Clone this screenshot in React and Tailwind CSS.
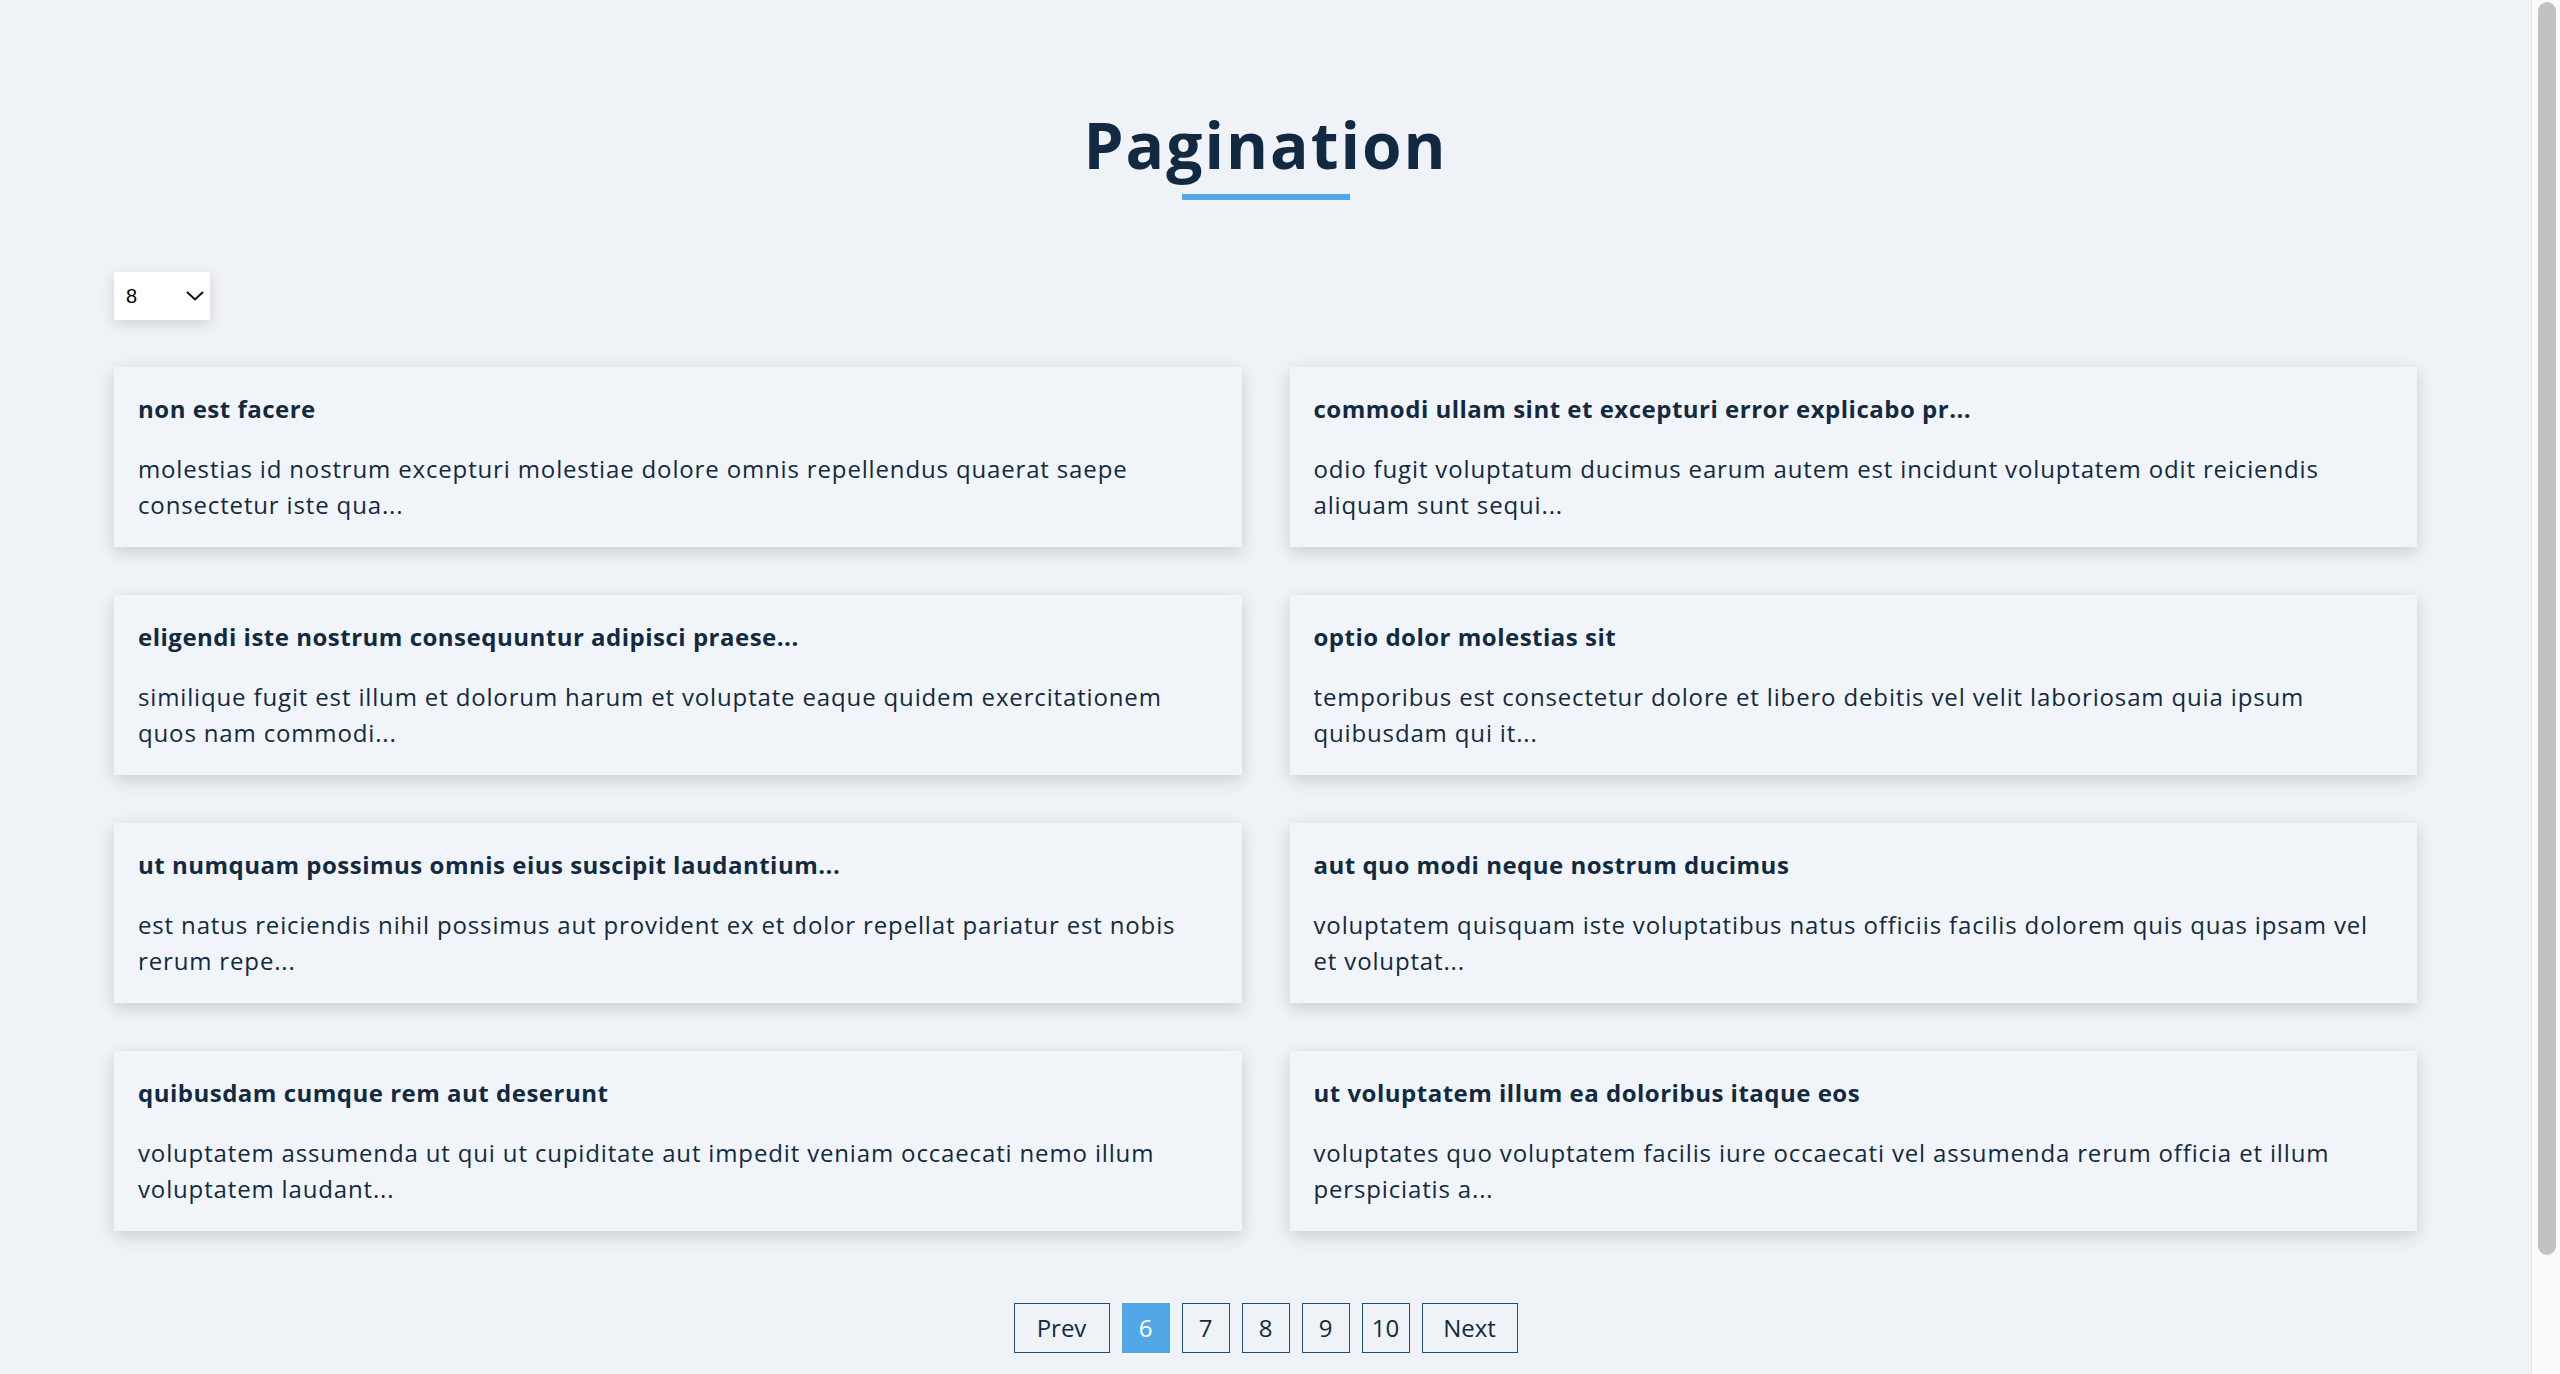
import React from "react";

const POSTS = [
  {
    title: "non est facere",
    body: "molestias id nostrum excepturi molestiae dolore omnis repellendus quaerat saepe consectetur iste qua...",
  },
  {
    title: "commodi ullam sint et excepturi error explicabo pr...",
    body: "odio fugit voluptatum ducimus earum autem est incidunt voluptatem odit reiciendis aliquam sunt sequi...",
  },
  {
    title: "eligendi iste nostrum consequuntur adipisci praese...",
    body: "similique fugit est illum et dolorum harum et voluptate eaque quidem exercitationem quos nam commodi...",
  },
  {
    title: "optio dolor molestias sit",
    body: "temporibus est consectetur dolore et libero debitis vel velit laboriosam quia ipsum quibusdam qui it...",
  },
  {
    title: "ut numquam possimus omnis eius suscipit laudantium...",
    body: "est natus reiciendis nihil possimus aut provident ex et dolor repellat pariatur est nobis rerum repe...",
  },
  {
    title: "aut quo modi neque nostrum ducimus",
    body: "voluptatem quisquam iste voluptatibus natus officiis facilis dolorem quis quas ipsam vel et voluptat...",
  },
  {
    title: "quibusdam cumque rem aut deserunt",
    body: "voluptatem assumenda ut qui ut cupiditate aut impedit veniam occaecati nemo illum voluptatem laudant...",
  },
  {
    title: "ut voluptatem illum ea doloribus itaque eos",
    body: "voluptates quo voluptatem facilis iure occaecati vel assumenda rerum officia et illum perspiciatis a...",
  },
];

const PAGES = [6, 7, 8, 9, 10];

function PageButton({ children, active, wide }) {
  return (
    <button
      className={`h-[50px] ${wide ? "w-[96px]" : "w-[48px]"} border text-[24px] leading-none ${
        active
          ? "bg-[#52a7e7] border-[#52a7e7] text-white"
          : "border-[#1b4f7c] text-[#112a42]"
      }`}
    >
      {children}
    </button>
  );
}

export default function App() {
  return (
    <div className="flex h-screen overflow-hidden bg-[#eff3f7] text-[#112a42] font-['Open_Sans',sans-serif]">
      <main className="flex-1 overflow-y-auto">
        <div className="mx-auto w-[2303px] pt-[113px] pb-[150px]">
          <h1 className="text-center text-[64px] leading-[64px] font-bold tracking-[2px]">
            Pagination
          </h1>
          <div className="mx-auto mt-[17px] h-[6px] w-[168px] bg-[#52a7e7]" />

          <div className="mt-[72px] flex h-[48px] w-[96px] items-center justify-between bg-white pl-[12px] pr-[6px] shadow-[0_4px_14px_rgba(0,0,0,0.14)] font-['Liberation_Sans',sans-serif] text-[20px] text-black">
            <span>8</span>
            <svg width="18" height="10" viewBox="0 0 18 10" fill="none">
              <polyline points="1,1 9,8.5 17,1" stroke="#111" strokeWidth="2" />
            </svg>
          </div>

          <div className="mt-[47px] grid grid-cols-2 gap-x-[48px] gap-y-[48px]">
            {POSTS.map((p) => (
              <div
                key={p.title}
                className="bg-[#f1f5f9] p-[24px] shadow-[0_5px_16px_rgba(0,0,0,0.16)]"
              >
                <h2 className="text-[24px] leading-[36px] font-bold tracking-[0.5px]">{p.title}</h2>
                <p className="mt-[24px] text-[24px] leading-[36px] tracking-[0.85px]">{p.body}</p>
              </div>
            ))}
          </div>

          <div className="mt-[72px] flex justify-center gap-[12px]">
            <PageButton wide>Prev</PageButton>
            {PAGES.map((n) => (
              <PageButton key={n} active={n === 6}>
                {n}
              </PageButton>
            ))}
            <PageButton wide>Next</PageButton>
          </div>
        </div>
      </main>

      {/* window scrollbar */}
      <div className="w-[29px] shrink-0 border-l border-[#e6e6e6] bg-[#fafafa] pl-[6px] pr-[4px] pt-[2px]">
        <div className="h-[1253px] rounded-full bg-[#c1c1c1]" />
      </div>
    </div>
  );
}
